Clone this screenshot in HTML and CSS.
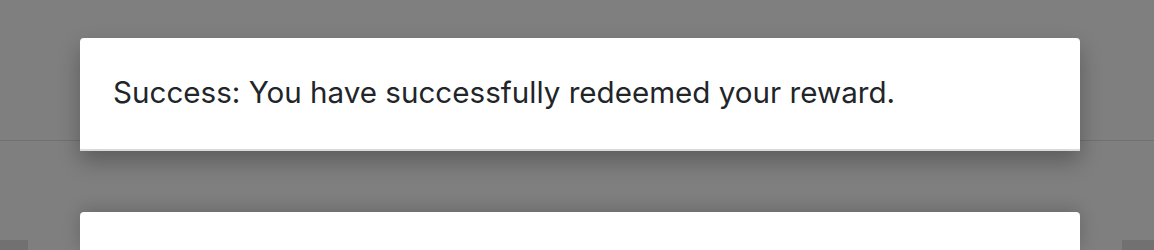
FILE: index.html
```html
<!DOCTYPE html>
<html>
<head>
<meta charset="utf-8">
<link rel="stylesheet" href="styles.css">
</head>
<body>
<div class="page">
  <div class="header"></div>
  <div class="page-footer">
    <span class="stub"></span>
    <span class="stub"></span>
  </div>
</div>
<div class="backdrop"></div>
<div class="modals">
  <div class="toast">
    <p class="toast-text">Success: You have successfully redeemed your reward.</p>
  </div>
  <div class="card"></div>
</div>
</body>
</html>
```

FILE: styles.css
```css
html, body {
  margin: 0;
  padding: 0;
}
body {
  width: 1154px;
  height: 250px;
  overflow: hidden;
  position: relative;
  background: #ffffff;
  font-family: Inter, Roboto, "Liberation Sans", sans-serif;
}
.page {
  display: flex;
  flex-direction: column;
  height: 250px;
}
.header {
  height: 140px;
  border-bottom: 1px solid #dee2e6;
}
.page-footer {
  flex: 1;
  display: flex;
  justify-content: space-between;
  align-items: flex-end;
}
.stub {
  display: block;
  width: 28px;
  height: 10px;
  background: #e2e2e2;
}
.stub:last-child {
  width: 32px;
}
.backdrop {
  position: absolute;
  inset: 0;
  background: rgba(0, 0, 0, 0.5);
}
.modals {
  position: absolute;
  inset: 0;
  overflow: hidden;
  display: flex;
  flex-direction: column;
  align-items: flex-start;
  padding: 38px 0 0 80px;
  gap: 61px;
}
.toast {
  flex-shrink: 0;
  width: 1000px;
  height: 113px;
  box-sizing: border-box;
  background: #ffffff;
  border-radius: 4px 4px 0 0;
  border-bottom: 2px solid #d8dbde;
  box-shadow: 0 10px 22px rgba(0, 0, 0, 0.28);
  padding: 36px 33px 0;
}
.toast-text {
  margin: 0;
  font-size: 29.6px;
  color: #212529;
  line-height: 36px;
}
.card {
  flex-shrink: 0;
  width: 1000px;
  height: 38px;
  background: #ffffff;
  border-radius: 4px 4px 0 0;
  box-shadow: 0 -2px 18px rgba(0, 0, 0, 0.2);
}
```
